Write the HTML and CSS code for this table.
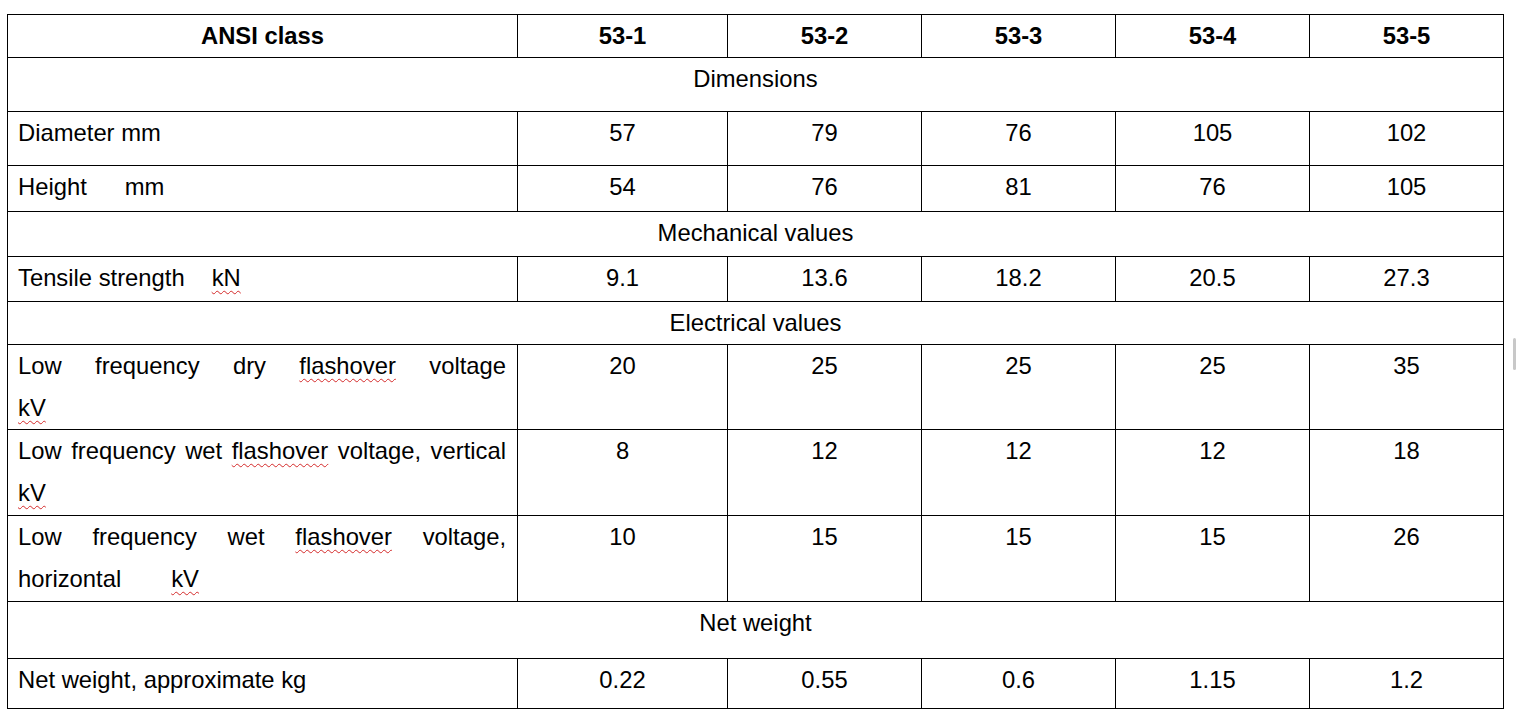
FILE: index.html
```html
<!DOCTYPE html>
<html lang="en">
<head>
<meta charset="utf-8">
<title>ANSI class table</title>
<link rel="stylesheet" href="styles.css">
</head>
<body>
<div class="page">
  <table class="spec">
    <colgroup>
      <col class="c-label">
      <col class="c-val">
      <col class="c-val2">
      <col class="c-val2">
      <col class="c-val2">
      <col class="c-val2">
    </colgroup>
    <tr class="h43">
      <th>ANSI class</th><th>53-1</th><th>53-2</th><th>53-3</th><th>53-4</th><th>53-5</th>
    </tr>
    <tr class="h54"><td class="section" colspan="6">Dimensions</td></tr>
    <tr class="h54">
      <td class="label">Diameter mm</td><td>57</td><td>79</td><td>76</td><td>105</td><td>102</td>
    </tr>
    <tr class="h46">
      <td class="label">Height<span class="gap g38">mm</span></td><td>54</td><td>76</td><td>81</td><td>76</td><td>105</td>
    </tr>
    <tr class="h45"><td class="section" colspan="6">Mechanical values</td></tr>
    <tr class="h45">
      <td class="label">Tensile strength<span class="gap g27 sp">kN</span></td><td>9.1</td><td>13.6</td><td>18.2</td><td>20.5</td><td>27.3</td>
    </tr>
    <tr class="h43"><td class="section" colspan="6">Electrical values</td></tr>
    <tr class="h85">
      <td class="label"><span class="jl">Low frequency dry <span class="sp">flashover</span> voltage</span><span class="sp">kV</span></td><td>20</td><td>25</td><td>25</td><td>25</td><td>35</td>
    </tr>
    <tr class="h86">
      <td class="label">Low frequency wet <span class="sp">flashover</span> voltage, vertical <span class="sp">kV</span></td><td>8</td><td>12</td><td>12</td><td>12</td><td>18</td>
    </tr>
    <tr class="h86">
      <td class="label"><span class="jl">Low frequency wet <span class="sp">flashover</span> voltage,</span>horizontal<span class="gap g50 sp">kV</span></td><td>10</td><td>15</td><td>15</td><td>15</td><td>26</td>
    </tr>
    <tr class="h57"><td class="section" colspan="6">Net weight</td></tr>
    <tr class="h50">
      <td class="label">Net weight, approximate kg</td><td>0.22</td><td>0.55</td><td>0.6</td><td>1.15</td><td>1.2</td>
    </tr>
  </table>
</div>
<div class="thumb"></div>
</body>
</html>
```

FILE: styles.css
```css
html, body {
  margin: 0;
  padding: 0;
  background: #ffffff;
}

.page {
  padding: 14px 0 0 7px;
}

.spec {
  border-collapse: collapse;
  table-layout: fixed;
  width: 1497px;
  font-family: "Liberation Sans", Arial, sans-serif;
  font-size: 23.8px;
  color: #000;
}

.c-label { width: 510px; }
.c-val { width: 210px; }
.c-val2 { width: 194px; }

.spec th,
.spec td {
  border: 1px solid #000;
  padding: 0 10px 0 10px;
  line-height: 42px;
  vertical-align: top;
  text-align: center;
}

.spec th {
  font-weight: bold;
}

.spec td.label {
  text-align: justify;
  padding-right: 11px;
}

.jl {
  display: block;
  text-align: justify;
  text-align-last: justify;
}

.gap { display: inline-block; }
.g27 { margin-left: 27px; }
.g38 { margin-left: 38px; }
.g50 { margin-left: 50px; }

.sp {
  text-decoration: underline wavy #d42a2a;
  text-decoration-thickness: 1px;
  text-underline-offset: 4px;
}

.h43 { height: 43px; }
.h45 { height: 45px; }
.h46 { height: 46px; }
.h50 { height: 50px; }
.h54 { height: 54px; }
.h57 { height: 57px; }
.h85 { height: 85px; }
.h86 { height: 86px; }

.thumb {
  position: fixed;
  left: 1513px;
  top: 338px;
  width: 3px;
  height: 32px;
  background: #c8c8c8;
  border-radius: 2px;
}
```
